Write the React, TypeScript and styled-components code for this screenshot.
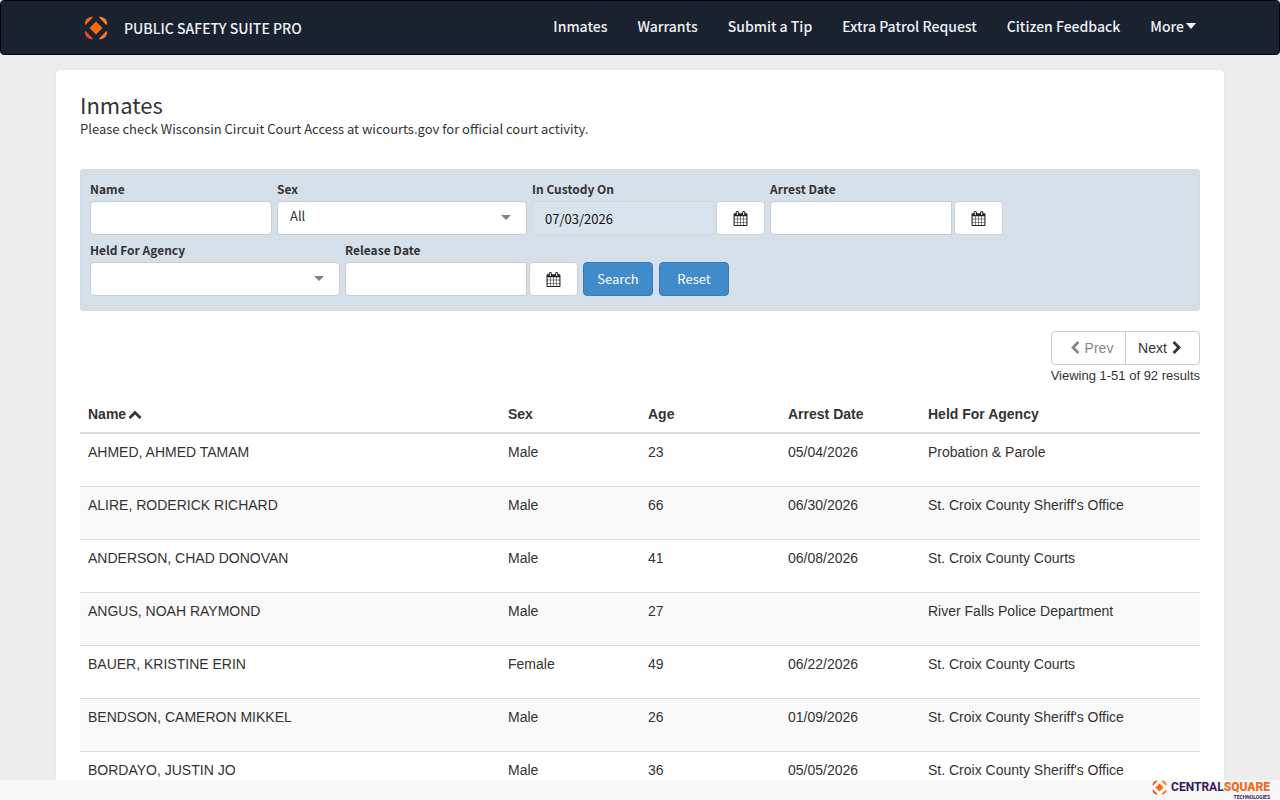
import React from "react";
import styled, { createGlobalStyle } from "styled-components";

const sourceSans = `"Source Sans Pro", "Noto Sans CJK SC", "Noto Sans", sans-serif`;
const arial = `"Liberation Sans", Arial, sans-serif`;

const GlobalStyle = createGlobalStyle`
  *, *::before, *::after { box-sizing: border-box; }
  body {
    margin: 0;
    background: #ededee;
    color: #333;
    font: 14px/20px ${arial};
  }
  button, input, select { font: inherit; color: inherit; }
`;

const Navbar = styled.header`
  background: #1a2230;
  border: 1px solid #02050c;
  border-radius: 4px;
  margin-bottom: 14px;
`;

const NavInner = styled.div`
  max-width: 1170px;
  min-height: 53px;
  margin: 0 auto;
  padding: 0 14px 0 29px;
  display: flex;
  align-items: center;
  justify-content: space-between;
  font-family: ${sourceSans};
  font-weight: 500;
  color: #eef1f6;
`;

const Brand = styled.a`
  display: flex;
  align-items: center;
  gap: 16px;
  font-size: 14px;
  line-height: 24px;
  color: inherit;
  text-decoration: none;
`;

const NavLinks = styled.nav`
  display: flex;
  padding-bottom: 4px;
`;

const NavLink = styled.a`
  display: flex;
  align-items: center;
  gap: 2px;
  padding: 0 15px;
  font-size: 14px;
  line-height: 24px;
  color: inherit;
  text-decoration: none;
`;

const Panel = styled.main`
  max-width: 1170px;
  margin: 0 auto;
  padding: 21px 24px 40px;
  background: #fff;
  border: 1px solid #e7e7e7;
  border-radius: 6px;
`;

const Title = styled.h1`
  margin: 0 0 2px;
  font: 400 22px/26px ${sourceSans};
`;

const Subtitle = styled.p`
  margin: 0 0 30px;
  font: 400 13px/20px ${sourceSans};
`;

const SearchForm = styled.form`
  display: flex;
  flex-direction: column;
  gap: 5px;
  padding: 9px 9px 14px;
  background: #d5e0eb;
  border: 1px solid #d3dbe3;
  border-radius: 3px;
  font: 400 13px/20px ${sourceSans};
`;

const FormRow = styled.div`
  display: flex;
  align-items: flex-end;
  gap: 5px;
`;

const Field = styled.div`
  display: flex;
  flex-direction: column;
  gap: 2px;
`;

const FieldLabel = styled.label`
  font-size: 12px;
  font-weight: 700;
`;

const ControlRow = styled.div`
  display: flex;
  gap: 2px;
`;

const TextBox = styled.input<{ $joined?: boolean }>`
  width: 182px;
  height: 34px;
  padding: 6px 12px;
  background: #fff;
  border: 1px solid #c6cdd4;
  border-radius: ${(p) => (p.$joined ? "4px 0 0 4px" : "4px")};
  color: #111;

  &:read-only {
    background: #d9e3ed;
    border-color: #cfd9e2;
  }
`;

const SelectWrap = styled.div`
  display: grid;
  align-items: center;
  width: 250px;

  > * { grid-area: 1 / 1; }
  > svg { justify-self: end; margin: 0 16px 2px 0; pointer-events: none; }
`;

const SelectBox = styled.select`
  width: 100%;
  height: 34px;
  padding: 0 30px 4px 12px;
  appearance: none;
  background: #fff;
  border: 1px solid #c6cdd4;
  border-radius: 4px;
`;

const CalendarButton = styled.button`
  display: flex;
  align-items: center;
  justify-content: center;
  width: 49px;
  height: 34px;
  padding: 0;
  background: #fff;
  border: 1px solid #ccd2d8;
  border-radius: 4px;
`;

const ActionButton = styled.button`
  width: 70px;
  height: 34px;
  margin-right: 1px;
  padding: 0;
  background: #428bca;
  border: 1px solid #357ebd;
  border-radius: 4px;
  color: #fff;
`;

const Pagination = styled.div`
  display: flex;
  flex-direction: column;
  align-items: flex-end;
  gap: 1px;
  margin: 20px 0 9px;
  font-size: 13px;
`;

const PagerGroup = styled.div`
  display: flex;
`;

const PagerButton = styled.button`
  display: flex;
  align-items: center;
  justify-content: center;
  gap: 3px;
  width: 75px;
  height: 34px;
  padding: 0;
  background: #fff;
  border: 1px solid #ccc;
  font-size: 14px;

  &:first-child { border-radius: 4px 0 0 4px; padding-left: 4px; }
  &:last-child { border-radius: 0 4px 4px 0; margin-left: -1px; padding-right: 3px; }
  &:disabled { color: #868686; }
`;

const ResultsTable = styled.table`
  width: 100%;
  table-layout: fixed;
  border-collapse: collapse;
`;

const Col = styled.col<{ $share: number }>`
  width: ${(p) => p.$share}%;
`;

const HeadCell = styled.th`
  padding: 8px;
  height: 38px;
  border-bottom: 2px solid #ddd;
  text-align: left;
  font-weight: 700;

  > svg { margin-left: 2px; vertical-align: -2px; }
`;

const Row = styled.tr`
  border-top: 1px solid #ddd;

  &:first-child { border-top: 0; }
  &:nth-child(even) { background: #f9f9f9; }
`;

const Cell = styled.td`
  height: 53px;
  padding: 8px;
  vertical-align: top;
`;

const Footer = styled.footer`
  position: fixed;
  inset: auto 0 0 0;
  height: 20px;
  padding-right: 10px;
  display: flex;
  justify-content: flex-end;
  background: #f8f8f8;
`;

const FooterLogo = styled.a`
  display: flex;
  gap: 4px;
  text-decoration: none;
`;

const FooterWords = styled.span`
  display: flex;
  flex-direction: column;
  align-items: flex-end;
`;

const FooterName = styled.span`
  font: 700 12px/15px Roboto, sans-serif;
  color: #35185f;

  > b { color: #f26a21; }
`;

const FooterTag = styled.span`
  font: 700 5px/5px Roboto, sans-serif;
  color: #35185f;
`;

function SquareMark({ size }: { size: number }) {
  return (
    <svg width={size} height={size} viewBox="0 0 24 24" aria-hidden="true">
      <path d="M12 5.5 18.5 12 12 18.5 5.5 12Z" fill="#fb6a09" />
      <path d="M.8 9V7.500Q1.500 1.500 7.500 .8H9Q9 2 7 3.500L3.500 7Q2 9 .8 9Z" fill="#e8651b" />
      <path d="M15 .8H16.500Q22.500 1.500 23.200 7.500V9Q22 9 20.500 7L17 3.500Q15 2 15 .8Z" fill="#f58220" />
      <path d="M23.200 15V16.500Q22.500 22.500 16.500 23.200H15Q15 22 17 20.500L20.500 17Q22 15 23.200 15Z" fill="#f47a20" />
      <path d="M9 23.200H7.500Q1.500 22.500 .8 16.500V15Q2 15 3.500 17L7 20.500Q9 22 9 23.200Z" fill="#ee4a23" />
    </svg>
  );
}

function CalendarIcon() {
  return (
    <svg width="15" height="15" viewBox="0 0 1792 1792" fill="#222" aria-hidden="true">
      <path d="M192 1664h288v-288h-288v288zm352 0h320v-288h-320v288zm-352-352h288v-320h-288v320zm352 0h320v-320h-320v320zm-352-384h288v-288h-288v288zm736 736h320v-288h-320v288zm-384-736h320v-288h-320v288zm768 736h288v-288h-288v288zm-384-352h320v-320h-320v320zm-352-864v-288q0-13-9.500-22.500t-22.500-9.500h-64q-13 0-22.500 9.500t-9.500 22.500v288q0 13 9.500 22.500t22.500 9.500h64q13 0 22.500-9.500t9.500-22.500zm736 864h288v-320h-288v320zm-384-384h320v-288h-320v288zm384 0h288v-288h-288v288zm32-480v-288q0-13-9.500-22.500t-22.500-9.500h-64q-13 0-22.500 9.500t-9.500 22.500v288q0 13 9.500 22.500t22.500 9.500h64q13 0 22.500-9.500t9.500-22.500zm384-64v1280q0 52-38 90t-90 38h-1408q-52 0-90-38t-38-90v-1280q0-52 38-90t90-38h128v-96q0-66 47-113t113-47h64q66 0 113 47t47 113v96h384v-96q0-66 47-113t113-47h64q66 0 113 47t47 113v96h128q52 0 90 38t38 90z" />
    </svg>
  );
}

const chevrons = {
  left: "M1427 301l-531 531 531 531q19 19 19 45t-19 45l-166 166q-19 19-45 19t-45-19l-742-742q-19-19-19-45t19-45l742-742q19-19 45-19t45 19l166 166q19 19 19 45t-19 45z",
  right: "M1363 877l-742 742q-19 19-45 19t-45-19l-166-166q-19-19-19-45t19-45l531-531-531-531q-19-19-19-45t19-45l166-166q19-19 45-19t45 19l742 742q19 19 19 45t-19 45z",
  up: "M1683 1331l-166 165q-19 19-45 19t-45-19l-531-531-531 531q-19 19-45 19t-45-19l-166-165q-19-19-19-45.500t19-45.500l742-741q19-19 45-19t45 19l742 741q19 19 19 45.500t-19 45.500z",
};

function Chevron({ to }: { to: keyof typeof chevrons }) {
  return (
    <svg width="14" height="14" viewBox="0 0 1792 1792" fill="currentColor" aria-hidden="true">
      <path d={chevrons[to]} />
    </svg>
  );
}

function Caret({ color, height = 5 }: { color: string; height?: number }) {
  return (
    <svg width="10" height={height} viewBox="0 0 10 5" preserveAspectRatio="none" fill={color} aria-hidden="true">
      <path d="M0 0H10L5 5Z" />
    </svg>
  );
}

function DateField({ id, label, value }: { id: string; label: string; value?: string }) {
  return (
    <Field>
      <FieldLabel htmlFor={id}>{label}</FieldLabel>
      <ControlRow>
        <TextBox id={id} type="text" $joined defaultValue={value} readOnly={!!value} />
        <CalendarButton type="button" aria-label={`Choose ${label}`}>
          <CalendarIcon />
        </CalendarButton>
      </ControlRow>
    </Field>
  );
}

function SelectField({ id, label, options }: { id: string; label: string; options: string[] }) {
  return (
    <Field>
      <FieldLabel htmlFor={id}>{label}</FieldLabel>
      <SelectWrap>
        <SelectBox id={id}>
          {options.map((o) => (
            <option key={o}>{o}</option>
          ))}
        </SelectBox>
        <Caret color="#808080" />
      </SelectWrap>
    </Field>
  );
}

const links = ["Inmates", "Warrants", "Submit a Tip", "Extra Patrol Request", "Citizen Feedback"];
const columns = [
  { name: "Name", share: 37.5 },
  { name: "Sex", share: 12.5 },
  { name: "Age", share: 12.5 },
  { name: "Arrest Date", share: 12.5 },
  { name: "Held For Agency", share: 25 },
];
const inmates = [
  ["AHMED, AHMED TAMAM", "Male", "23", "05/04/2026", "Probation & Parole"],
  ["ALIRE, RODERICK RICHARD", "Male", "66", "06/30/2026", "St. Croix County Sheriff's Office"],
  ["ANDERSON, CHAD DONOVAN", "Male", "41", "06/08/2026", "St. Croix County Courts"],
  ["ANGUS, NOAH RAYMOND", "Male", "27", "", "River Falls Police Department"],
  ["BAUER, KRISTINE ERIN", "Female", "49", "06/22/2026", "St. Croix County Courts"],
  ["BENDSON, CAMERON MIKKEL", "Male", "26", "01/09/2026", "St. Croix County Sheriff's Office"],
  ["BORDAYO, JUSTIN JO", "Male", "36", "05/05/2026", "St. Croix County Sheriff's Office"],
];

export default function App() {
  return (
    <>
      <GlobalStyle />
      <Navbar>
        <NavInner>
          <Brand href="#">
            <SquareMark size={24} />
            PUBLIC SAFETY SUITE PRO
          </Brand>
          <NavLinks>
            {links.map((l) => (
              <NavLink href="#" key={l}>{l}</NavLink>
            ))}
            <NavLink href="#">
              More
              <Caret color="#fff" height={6} />
            </NavLink>
          </NavLinks>
        </NavInner>
      </Navbar>
      <Panel>
        <Title>Inmates</Title>
        <Subtitle>Please check Wisconsin Circuit Court Access at wicourts.gov for official court activity.</Subtitle>
        <SearchForm onSubmit={(e) => e.preventDefault()}>
          <FormRow>
            <Field>
              <FieldLabel htmlFor="name">Name</FieldLabel>
              <TextBox id="name" type="text" />
            </Field>
            <SelectField id="sex" label="Sex" options={["All", "Male", "Female"]} />
            <DateField id="custody" label="In Custody On" value="07/03/2026" />
            <DateField id="arrest" label="Arrest Date" />
          </FormRow>
          <FormRow>
            <SelectField id="agency" label="Held For Agency" options={[""]} />
            <DateField id="release" label="Release Date" />
            <ActionButton type="submit">Search</ActionButton>
            <ActionButton type="reset">Reset</ActionButton>
          </FormRow>
        </SearchForm>
        <Pagination>
          <PagerGroup>
            <PagerButton type="button" disabled>
              <Chevron to="left" />
              Prev
            </PagerButton>
            <PagerButton type="button">
              Next
              <Chevron to="right" />
            </PagerButton>
          </PagerGroup>
          <span>Viewing 1-51 of 92 results</span>
        </Pagination>
        <ResultsTable>
          <colgroup>
            {columns.map((c) => (
              <Col key={c.name} $share={c.share} />
            ))}
          </colgroup>
          <thead>
            <tr>
              {columns.map((c, i) => (
                <HeadCell key={c.name} scope="col">
                  {c.name}
                  {i === 0 && <Chevron to="up" />}
                </HeadCell>
              ))}
            </tr>
          </thead>
          <tbody>
            {inmates.map((row) => (
              <Row key={row[0]}>
                {row.map((text, i) => (
                  <Cell key={i}>{text}</Cell>
                ))}
              </Row>
            ))}
          </tbody>
        </ResultsTable>
      </Panel>
      <Footer>
        <FooterLogo href="#">
          <SquareMark size={15} />
          <FooterWords>
            <FooterName>CENTRAL<b>SQUARE</b></FooterName>
            <FooterTag>TECHNOLOGIES</FooterTag>
          </FooterWords>
        </FooterLogo>
      </Footer>
    </>
  );
}
